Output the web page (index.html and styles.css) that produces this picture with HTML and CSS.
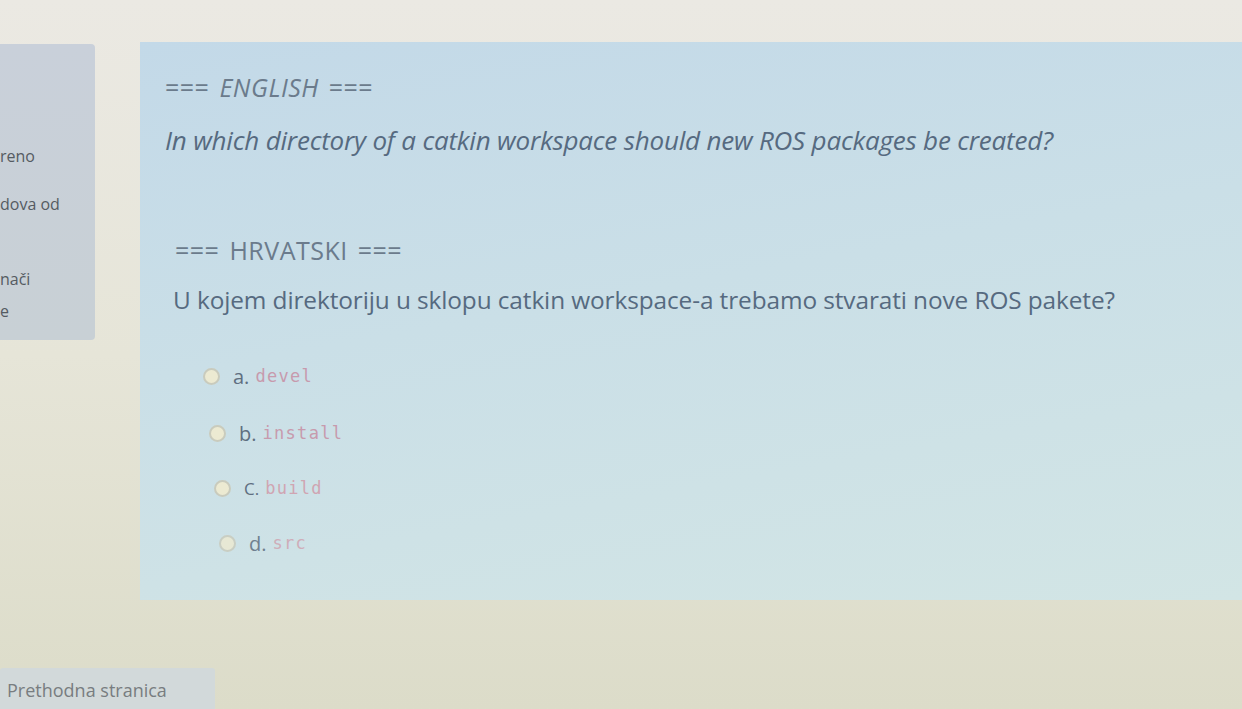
FILE: index.html
```html
<!DOCTYPE html>
<html lang="hr">
<head>
<meta charset="utf-8">
<title>Pitanje</title>
<link rel="stylesheet" href="styles.css">
</head>
<body>
<div class="page">
  <div class="topbar"></div>
  <div class="row">
    <aside class="info">
      <div class="info-line l1">reno</div>
      <div class="info-line l2">dova od</div>
      <div class="info-line l3">nači</div>
      <div class="info-line l4">e</div>
    </aside>
    <main class="qtext">
      <div class="head head-en">=== <i>ENGLISH</i> ===</div>
      <div class="q q-en">In which directory of a catkin workspace should new ROS packages be created?</div>
      <div class="head head-hr">=== HRVATSKI ===</div>
      <div class="q q-hr">U kojem direktoriju u sklopu catkin workspace-a trebamo stvarati nove ROS pakete?</div>
      <div class="answers">
        <label class="opt opt-a"><span class="radio"></span><span class="letter">a.</span><code>devel</code></label>
        <label class="opt opt-b"><span class="radio"></span><span class="letter">b.</span><code>install</code></label>
        <label class="opt opt-c"><span class="radio"></span><span class="letter">C.</span><code>build</code></label>
        <label class="opt opt-d"><span class="radio"></span><span class="letter">d.</span><code>src</code></label>
      </div>
    </main>
  </div>
  <div class="bottom">
    <button class="prev">Prethodna stranica</button>
  </div>
</div>
</body>
</html>
```

FILE: styles.css
```css
html, body {
  margin: 0;
  padding: 0;
  width: 1242px;
  height: 709px;
  overflow: hidden;
}
body {
  background: linear-gradient(180deg, #ebe9e3 0%, #e6e5d8 50%, #dcdcc9 100%);
  font-family: "Open Sans", "Noto Sans", sans-serif;
  color: #5b6a7c;
}
.page {
  display: flex;
  flex-direction: column;
  height: 709px;
}
.topbar {
  height: 42px;
  flex: none;
}
.row {
  display: flex;
  align-items: flex-start;
  gap: 45px;
  height: 558px;
  flex: none;
}
.info {
  width: 95px;
  height: 296px;
  margin-top: 2px;
  background: linear-gradient(180deg, #c9d0da 0%, #c8d0d5 100%);
  border-radius: 0 4px 4px 0;
  box-sizing: border-box;
  padding-top: 101px;
  color: #555b62;
  font-size: 16px;
  line-height: 22px;
  flex: none;
}
.l2 { margin-top: 26px; }
.l3 { margin-top: 53px; }
.l4 { margin-top: 10px; }

.qtext {
  flex: 1;
  height: 558px;
  background: linear-gradient(170deg, #c3d9e8 0%, #cadfe7 45%, #d2e5e5 100%);
  box-sizing: border-box;
  padding: 30px 0 0 25px;
}
.head {
  font-size: 25px;
  line-height: 30px;
  color: #6b7b8c;
  word-spacing: 3px;
  letter-spacing: 0.5px;
}
.head i { font-style: italic; }
.q {
  line-height: 30px;
  color: #566a80;
}
.q-en {
  font-size: 26px;
  font-style: italic;
  margin-top: 23px;
  letter-spacing: -0.2px;
}
.head-hr {
  margin-top: 80px;
  padding-left: 10px;
}
.q-hr {
  font-size: 24.4px;
  margin-top: 20px;
  padding-left: 8px;
  letter-spacing: -0.1px;
}
.answers {
  margin-top: 46px;
  display: flex;
  flex-direction: column;
  gap: 25px;
}
.opt {
  display: flex;
  align-items: center;
  height: 30px;
  font-size: 20px;
  color: #5f6f80;
}
.opt-a { padding-left: 38px; }
.opt-b { padding-left: 44px; margin-top: 2px; }
.opt-c { padding-left: 49px; }
.opt-d { padding-left: 54px; opacity: 0.85; }
.radio {
  width: 13px;
  height: 13px;
  border-radius: 50%;
  border: 2px solid #c9cbbd;
  background: #ecead2;
  margin-right: 13px;
  flex: none;
}
.letter { margin-right: 6px; }
.opt code {
  font-family: "DejaVu Sans Mono", "Liberation Mono", monospace;
  font-size: 17px;
  letter-spacing: 1.3px;
  color: #c79aad;
}
.opt-c code, .opt-d code { color: #d0a5b2; }
.opt-c .letter { font-size: 17px; }

.bottom {
  margin-top: 68px;
  flex: none;
}
.prev {
  width: 215px;
  height: 44px;
  border: none;
  border-radius: 3px 3px 0 0;
  background: #d2d9da;
  color: #787d80;
  font-family: "Open Sans", "Noto Sans", sans-serif;
  font-size: 18px;
  text-align: left;
  padding: 0 0 0 7px;
  line-height: 44px;
}
```
